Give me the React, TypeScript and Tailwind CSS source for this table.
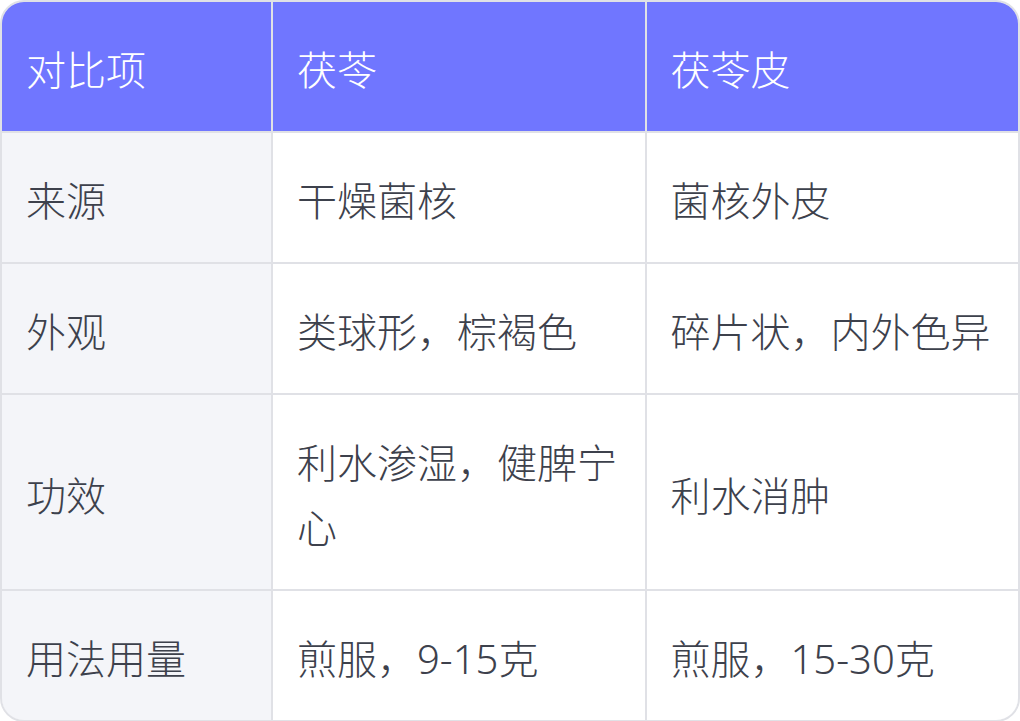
const rows: [string, string, string][] = [
  ['来源', '干燥菌核', '菌核外皮'],
  ['外观', '类球形，棕褐色', '碎片状，内外色异'],
  ['功效', '利水渗湿，健脾宁心', '利水消肿'],
  ['用法用量', '煎服，9-15克', '煎服，15-30克'],
];

const headers = ['对比项', '茯苓', '茯苓皮'];

// Comparison table — header band in indigo, first column tinted as a label column.
export default function App() {
  return (
    <div
      className="h-[721px] w-[1020px] bg-white"
      style={{ fontFamily: '"Noto Sans", "Noto Sans CJK SC", sans-serif' }}
    >
      <div className="overflow-hidden rounded-[24px] border-2 border-[#e0e1e6]">
        <div className="grid grid-cols-[269px_1fr_1fr] gap-[2px] bg-[#e0e1e6] text-[40px] font-light leading-[65px]">
          {headers.map((h) => (
            <div key={h} className="flex items-center bg-[#7076ff] px-6 pt-[35px] pb-[29px] text-white">
              {h}
            </div>
          ))}
          {rows.map(([label, a, b]) => (
            <div key={label} className="contents">
              <div className="flex items-center bg-[#f4f5f9] px-6 pt-[35px] pb-[29px] text-[#3d414c]">{label}</div>
              <div className="flex items-center bg-white px-6 pt-[35px] pb-[29px] text-[#3d414c]">{a}</div>
              <div className="flex items-center bg-white px-6 pt-[35px] pb-[29px] text-[#3d414c]">{b}</div>
            </div>
          ))}
        </div>
      </div>
    </div>
  );
}
